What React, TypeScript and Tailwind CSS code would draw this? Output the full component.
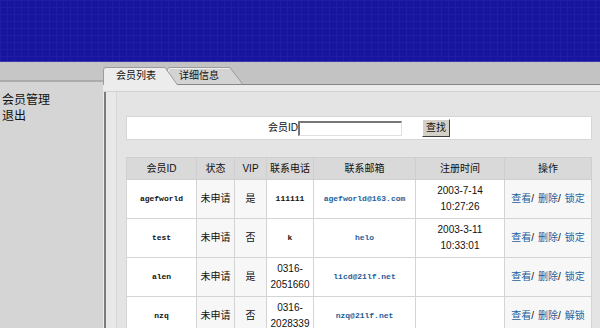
import React from "react";

type Member = {
  id: string;
  vip: string;
  phone: string[];
  phoneMono?: boolean;
  email: string;
  date?: string[];
  lock: string;
};

const members: Member[] = [
  { id: "agefworld", vip: "是", phone: ["111111"], phoneMono: true, email: "agefworld@163.com", date: ["2003-7-14", "10:27:26"], lock: "锁定" },
  { id: "test", vip: "否", phone: ["k"], phoneMono: true, email: "helo", date: ["2003-3-11", "10:33:01"], lock: "锁定" },
  { id: "alen", vip: "是", phone: ["0316-", "2051660"], email: "licd@21lf.net", lock: "锁定" },
  { id: "nzq", vip: "否", phone: ["0316-", "2028339"], email: "nzq@21lf.net", lock: "解锁" },
];

const mono = "[font-family:'Liberation_Mono','Noto_Sans_CJK_SC',monospace] text-[8px] font-semibold";

function Tab({ label, active, width }: { label: string; active?: boolean; width: number }) {
  const h = active ? 18 : 17;
  return (
    <div
      className={`relative shrink-0 ${active ? "z-10 mb-[-1px]" : "-ml-[11px]"}`}
      style={{ width, height: h }}
    >
      <svg className="absolute inset-0" width={width} height={h}>
        <path
          d={`M0.5 ${h} V3 Q0.5 0.5 3 0.5 H${width - 13} L${width - 0.5} ${h}`}
          fill={active ? "#ececec" : "#d3d3d3"}
          stroke="#9c9c9c"
        />
        {!active && <path d={`M1.5 ${h} V3 Q1.5 1.5 3 1.5 H${width - 13.5}`} fill="none" stroke="#ededed" />}
      </svg>
      <span className={`relative block text-[10px] leading-[18px] text-[#111] ${active ? "pl-[13px]" : "pl-[12px]"}`}>
        {label}
      </span>
    </div>
  );
}

function Ops({ lock }: { lock: string }) {
  return (
    <span className="whitespace-nowrap">
      <a className="text-[#1d5f9c]">查看</a>
      <span className="pr-[4px]">/</span>
      <a className="text-[#1d5f9c]">删除</a>
      <span className="pr-[4px]">/</span>
      <a className="text-[#1d5f9c]">{lock}</a>
    </span>
  );
}

export default function App() {
  return (
    <div className="w-[600px] h-[328px] overflow-hidden bg-[#e4e4e4] text-[#111] [font-family:'Liberation_Sans','Noto_Sans_CJK_SC',sans-serif]">
      {/* header */}
      <div className="h-[62px] bg-[#17159d] bg-[linear-gradient(to_right,#1f1da7_1px,transparent_1px),linear-gradient(to_bottom,#1f1da7_1px,transparent_1px)] [background-size:7px_7px] border-b border-[#3a38a8]" />

      <div className="flex">
        {/* sidebar */}
        <div className="w-[103px] shrink-0 bg-[#d5d5d5] h-[266px]">
          <div className="h-[20px] bg-[#c6c6c6] border-b-2 border-[#acacac]" />
          <ul className="pt-[10px] pl-[2px] text-[12px] leading-[16px] text-[#111]">
            <li>会员管理</li>
            <li>退出</li>
          </ul>
        </div>

        {/* main */}
        <div className="flex-1">
          <div className="h-[23px] bg-[#c3c3c3] border-b border-[#858585] flex items-end">
            <Tab label="会员列表" active width={75} />
            <Tab label="详细信息" width={76} />
          </div>

          <div className="bg-[#ececec] pt-[6px]">
            <div className="flex border-t border-[#d2d2d2]">
              <div className="ml-[1px] w-[2px] bg-[#7c7c7c]" />
              <div className="w-[11px] bg-[#e8e8e8] border-r border-[#d6d6d6]" />
              <div className="flex-1 bg-[#e4e4e4] pl-[9px] pr-[8px] pt-[24px] h-[250px]">
                {/* search */}
                <div className="h-[24px] bg-white border border-[#d6d6d6] flex items-center justify-center">
                  <span className="text-[10px] leading-none">会员ID</span>
                  <input
                    className="w-[104px] h-[15px] bg-white border-t-2 border-l-2 border-b border-r border-t-[#777] border-l-[#777] border-b-[#e0e0e0] border-r-[#e0e0e0] outline-none"
                    readOnly
                  />
                  <button className="ml-[20px] w-[28px] h-[18px] bg-[#d4d0c8] border border-t-white border-l-white border-b-[#404040] border-r-[#404040] text-[10px] leading-none text-[#111]">
                    查找
                  </button>
                </div>

                {/* table */}
                <table className="mt-[17px] w-[465px] table-fixed border-collapse text-[10px] text-center">
                  <colgroup>
                    <col className="w-[70px]" />
                    <col className="w-[38px]" />
                    <col className="w-[32px]" />
                    <col className="w-[47px]" />
                    <col className="w-[102px]" />
                    <col className="w-[89px]" />
                    <col className="w-[87px]" />
                  </colgroup>
                  <thead>
                    <tr className="h-[22px] bg-[#d9d9d9]">
                      <th className="font-normal border border-[#cfcfcf]">会员ID</th>
                      <th className="font-normal border border-[#cfcfcf]">状态</th>
                      <th className="font-normal border border-[#cfcfcf]">VIP</th>
                      <th className="font-normal border border-[#cfcfcf]">联系电话</th>
                      <th className="font-normal border border-[#cfcfcf]">联系邮箱</th>
                      <th className="font-normal border border-[#cfcfcf]">注册时间</th>
                      <th className="font-normal border border-[#cfcfcf]">操作</th>
                    </tr>
                  </thead>
                  <tbody>
                    {members.map((m) => (
                      <tr key={m.id} className="h-[39px] leading-[16px]">
                        <td className={`bg-white border border-[#d4d4d4] ${mono}`}>{m.id}</td>
                        <td className="bg-[#f7f7f7] border border-[#d4d4d4]">未申请</td>
                        <td className="bg-[#f7f7f7] border border-[#d4d4d4]">{m.vip}</td>
                        <td className={`bg-white border border-[#d4d4d4] ${m.phoneMono ? mono : ""}`}>
                          {m.phone.map((p) => (
                            <div key={p}>{p}</div>
                          ))}
                        </td>
                        <td className={`bg-white border border-[#d4d4d4] text-[#1d5f9c] ${mono}`}>{m.email}</td>
                        <td className="bg-white border border-[#d4d4d4]">
                          {m.date?.map((d) => (
                            <div key={d}>{d}</div>
                          ))}
                        </td>
                        <td className="bg-[#f7f7f7] border border-[#d4d4d4]">
                          <Ops lock={m.lock} />
                        </td>
                      </tr>
                    ))}
                  </tbody>
                </table>
              </div>
            </div>
          </div>
        </div>
      </div>
    </div>
  );
}
